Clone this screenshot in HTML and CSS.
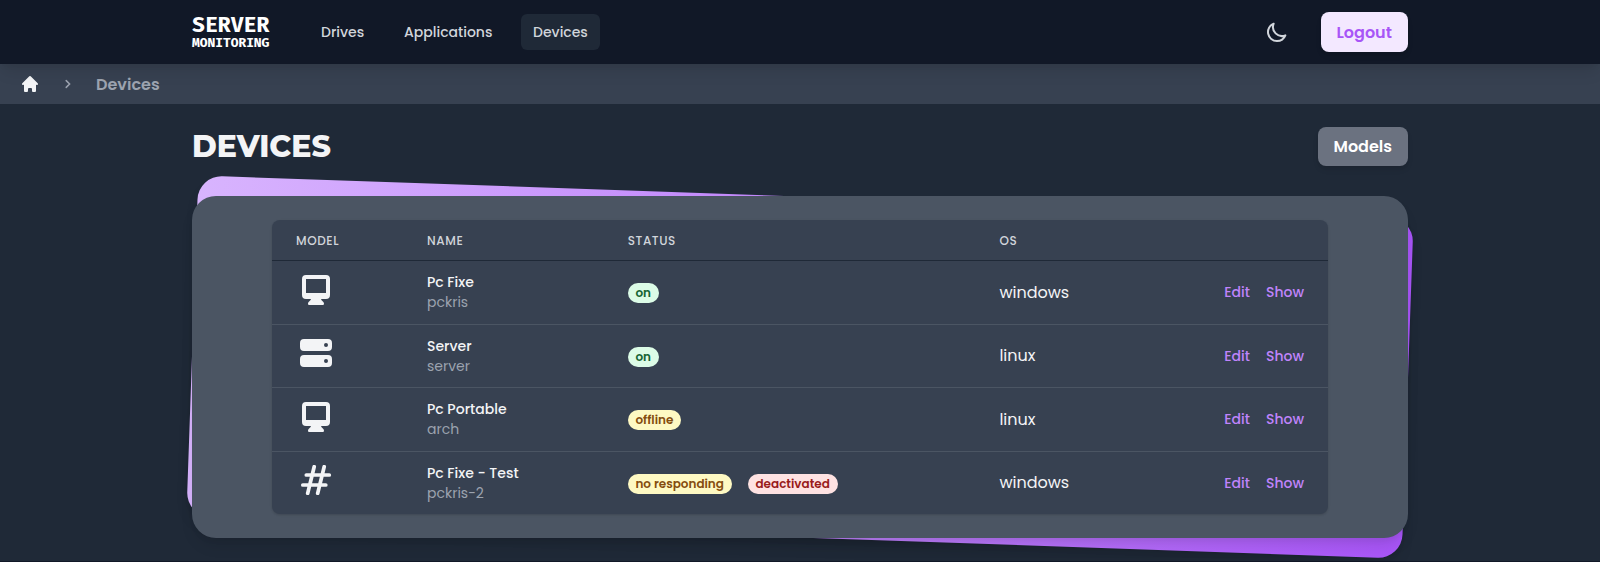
FILE: index.html
```html
<!DOCTYPE html>
<html lang="en">
<head>
<meta charset="utf-8">
<title>Devices - Server Monitoring</title>
<link rel="stylesheet" href="styles.css">
</head>
<body>
<svg class="sprite" width="0" height="0" aria-hidden="true">
  <symbol id="desktop" viewBox="0 0 28 30"><path fill-rule="evenodd" d="M4 0h20a4 4 0 0 1 4 4v16a4 4 0 0 1-4 4h-5c.3 2 3 2.500 3 4.500 0 1-.6 1.500-1.500 1.500h-13c-.9 0-1.500-.5-1.500-1.500 0-2 2.700-2.500 3-4.500H4a4 4 0 0 1-4-4V4a4 4 0 0 1 4-4zM4 4v14h20V4z"/></symbol>
  <symbol id="server" viewBox="0 0 32 28"><path fill-rule="evenodd" d="M4 0h24a4 4 0 0 1 4 4v4a4 4 0 0 1-4 4H4a4 4 0 0 1-4-4V4a4 4 0 0 1 4-4zM26 4a2 2 0 1 0 0 4 2 2 0 0 0 0-4zM4 16h24a4 4 0 0 1 4 4v4a4 4 0 0 1-4 4H4a4 4 0 0 1-4-4v-4a4 4 0 0 1 4-4zM26 20a2 2 0 1 0 0 4 2 2 0 0 0 0-4z"/></symbol>
</svg>
<header class="navbar">
  <div class="container navbar-row">
    <a class="logo">
      <span class="logo-top">SERVER</span>
      <span class="logo-bottom">MONITORING</span>
    </a>
    <nav class="links">
      <a class="link drives">Drives</a>
      <a class="link apps">Applications</a>
      <a class="link active">Devices</a>
    </nav>
    <svg class="moon" width="24" height="24" viewBox="0 0 24 24"><path d="M20.354 15.354A9 9 0 0 1 8.646 3.646 9.003 9.003 0 0 0 12 21a9.003 9.003 0 0 0 8.354-5.646z"/></svg>
    <a class="button logout">Logout</a>
  </div>
</header>
<div class="breadcrumb">
  <svg class="home" width="20" height="20" viewBox="0 0 20 20"><path d="M10.707 2.293a1 1 0 0 0-1.414 0l-7 7a1 1 0 0 0 1.414 1.414L4 10.414V17a1 1 0 0 0 1 1h2a1 1 0 0 0 1-1v-2a1 1 0 0 1 1-1h2a1 1 0 0 1 1 1v2a1 1 0 0 0 1 1h2a1 1 0 0 0 1-1v-6.586l.293.293a1 1 0 0 0 1.414-1.414l-7-7z"/></svg>
  <svg class="chevron" width="6" height="10" viewBox="0 0 6 10"><path d="M1.200 1.600L4.600 5 1.200 8.400"/></svg>
  <span class="crumb">Devices</span>
</div>
<main class="container">
  <div class="heading">
    <h1 class="title">DEVICES</h1>
    <a class="button models">Models</a>
  </div>
  <section class="panel">
    <div class="tilt"></div>
    <div class="card">
      <div class="table">
        <div class="row head"><span>MODEL</span><span>NAME</span><span>STATUS</span><span>OS</span><span></span></div>
        <div class="row">
          <svg class="icon desktop" width="28" height="30"><use href="#desktop"/></svg>
          <div><div class="name">Pc Fixe</div><div class="host">pckris</div></div>
          <div class="status"><span class="badge green">on</span></div>
          <span class="os">windows</span>
          <div class="actions"><a>Edit</a><a>Show</a></div>
        </div>
        <div class="row">
          <svg class="icon" width="32" height="28"><use href="#server"/></svg>
          <div><div class="name">Server</div><div class="host">server</div></div>
          <div class="status"><span class="badge green">on</span></div>
          <span class="os">linux</span>
          <div class="actions"><a>Edit</a><a>Show</a></div>
        </div>
        <div class="row">
          <svg class="icon desktop" width="28" height="30"><use href="#desktop"/></svg>
          <div><div class="name">Pc Portable</div><div class="host">arch</div></div>
          <div class="status"><span class="badge yellow">offline</span></div>
          <span class="os">linux</span>
          <div class="actions"><a>Edit</a><a>Show</a></div>
        </div>
        <div class="row">
          <svg class="icon hash" width="32" height="30" viewBox="0 0 32 30"><path d="M14.200 1.700L7.700 28.300M24.200 1.700L17.700 28.300M6.300 10h23M2.800 20h23"/></svg>
          <div><div class="name">Pc Fixe - Test</div><div class="host">pckris-2</div></div>
          <div class="status"><span class="badge yellow">no responding</span><span class="badge red">deactivated</span></div>
          <span class="os">windows</span>
          <div class="actions"><a>Edit</a><a>Show</a></div>
        </div>
      </div>
    </div>
  </section>
</main>
<footer class="footer"></footer>
</body>
</html>
```

FILE: styles.css
```css
* { box-sizing: border-box; }
body { margin: 0; height: 562px; overflow: hidden; background: #1f2937; color: #f3f4f6; font: 400 16px/24px Poppins, Inter, sans-serif; }
.sprite { position: absolute; }
.container { width: 1216px; margin: 0 auto; }
.navbar { position: relative; z-index: 2; height: 64px; background: #111827; box-shadow: 0 10px 15px -3px rgb(0 0 0 / .1), 0 4px 6px -2px rgb(0 0 0 / .05); }
.navbar-row { display: flex; align-items: center; height: 64px; }
.logo { display: flex; flex-direction: column; width: 80px; height: 36px; padding-top: 1px; color: #fff; font-family: "Fira Mono", "Noto Sans Mono", "DejaVu Sans Mono", monospace; font-weight: 700; }
.logo-top { font-size: 21.500px; line-height: 21px; }
.logo-bottom { font-size: 12.900px; line-height: 14px; }
.links { display: flex; gap: 16px; margin-left: 37px; }
.link { height: 36px; padding: 8px 12px; border-radius: 6px; color: #d1d5db; font-size: 14px; font-weight: 500; line-height: 20px; white-space: nowrap; }
.drives { width: 67px; }
.apps { width: 113px; }
.active { width: 79px; background: #1f2937; }
.moon { margin-left: auto; fill: none; stroke: #d1d5db; stroke-width: 2; stroke-linejoin: round; }
.button { border-radius: 8px; padding: 8px 15.500px; font-weight: 600; box-shadow: 0 4px 6px -1px rgb(0 0 0 / .1), 0 2px 4px -1px rgb(0 0 0 / .06); }
.logout { width: 87px; height: 40px; margin-left: 32px; padding-top: 9px; background: #f3e8ff; color: #a855f7; }
.breadcrumb { display: flex; align-items: center; height: 40px; padding-left: 20px; background: #374151; }
.home { fill: #f3f4f6; }
.chevron { margin-left: 25px; fill: none; stroke: #9ca3af; stroke-width: 1.500; stroke-linecap: round; }
.crumb { margin-left: 25px; padding-top: 1px; color: #9ca3af; font-weight: 600; }
.heading { display: flex; justify-content: space-between; align-items: flex-start; height: 92px; padding-top: 23px; }
.title { margin: 0; font: 800 30px/40px Montserrat, Inter, sans-serif; }
.models { width: 90px; height: 39px; background: #6b7280; color: #fff; }
.panel { position: relative; height: 342px; }
.tilt { position: absolute; inset: 0; border-radius: 24px; background: linear-gradient(to right, #d8b4fe, #a855f7); transform: rotate(2deg) scaleY(.9965); box-shadow: 0 10px 15px -3px rgb(0 0 0 / .1), 0 4px 6px -2px rgb(0 0 0 / .05); }
.card { position: relative; height: 342px; padding: 24px 80px; border-radius: 24px; background: #4b5563; box-shadow: 0 10px 15px -3px rgb(0 0 0 / .1), 0 4px 6px -2px rgb(0 0 0 / .05); }
.table { height: 294px; border-radius: 8px; background: #374151; overflow: hidden; box-shadow: 0 1px 3px rgb(0 0 0 / .1), 0 1px 2px rgb(0 0 0 / .06); }
.row { display: grid; grid-template-columns: 131px 200.700px 371.700px 180.600px 1fr; align-items: center; height: 63.500px; padding: 0 24px; border-top: 1px solid #4b5563; }
.head { height: 40px; border: 0; color: #d1d5db; font-size: 12px; font-weight: 500; letter-spacing: .6px; padding-top: 1px; }
.head + .row { border-color: #1f2937; }
.icon { margin-left: 4px; margin-top: -5.500px; fill: #f3f4f6; }
.desktop { margin-left: 6px; margin-top: -4.500px; }
.hash { fill: none; stroke: #f3f4f6; stroke-width: 3.700; stroke-linecap: round; }
.name { font-size: 14px; line-height: 20px; font-weight: 500; }
.host { font-size: 14px; line-height: 20px; color: #9ca3af; }
.status { display: flex; gap: 16px; margin-top: 1.500px; }
.badge { height: 20px; padding: 0 7.750px; border-radius: 10px; font-size: 12px; line-height: 20px; font-weight: 600; }
.green { background: #dcfce7; color: #166534; }
.yellow { background: #fef9c3; color: #854d0e; }
.red { background: #fee2e2; color: #991b1b; }
.os { margin-top: 1.400px; }
.actions { display: flex; justify-content: flex-end; gap: 16px; color: #c084fc; font-size: 14px; font-weight: 500; }
.footer { height: 24px; margin-top: 23px; background: #111827; }
```
